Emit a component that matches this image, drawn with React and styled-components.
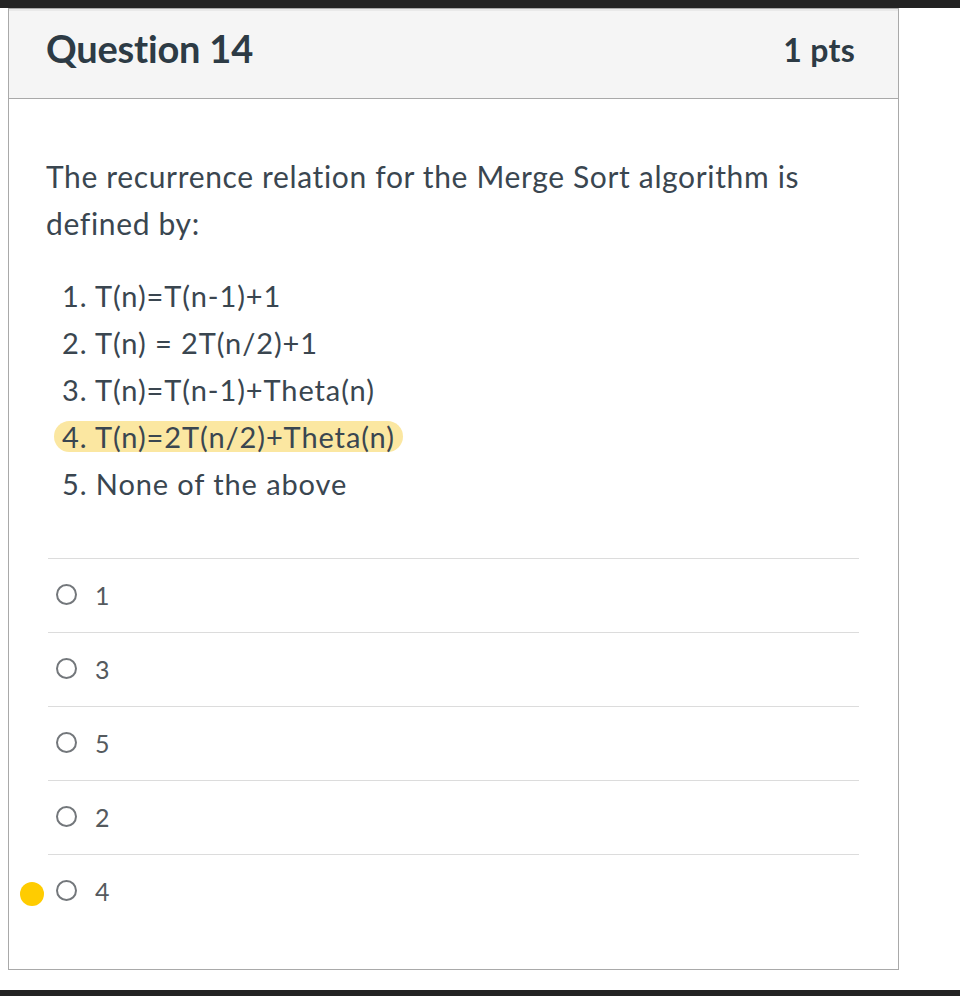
import React from 'react';
import styled, { createGlobalStyle } from 'styled-components';

const GlobalStyle = createGlobalStyle`
  html, body {
    margin: 0;
    padding: 0;
    background: #ffffff;
  }
  body {
    font-family: Lato, "Open Sans", "Liberation Sans", sans-serif;
    color: #2d3b45;
  }
`;

const Page = styled.div`
  width: 960px;
  height: 996px;
  display: flex;
  flex-direction: column;
  overflow: hidden;
`;

const DarkBar = styled.div`
  height: ${props => props.size}px;
  background: #232323;
  flex-shrink: 0;
`;

const Stage = styled.div`
  flex: 1;
  padding: 0 61px 0 8px;
`;

const Card = styled.div`
  border: 1px solid #a9a9a9;
  background: #fff;
  height: 962px;
  box-sizing: border-box;
  display: flex;
  flex-direction: column;
`;

const Header = styled.div`
  height: 90px;
  box-sizing: border-box;
  background: #f5f5f5;
  border-top: 2px solid #e9e9e9;
  border-bottom: 1px solid #a9a9a9;
  display: flex;
  align-items: center;
  justify-content: space-between;
  padding: 0 43px 10px 37px;
`;

const Title = styled.h2`
  margin: 0 0 4px;
  font-size: 38px;
  font-weight: 700;
  color: #2d3b45;
  letter-spacing: -0.2px;
`;

const Points = styled.span`
  font-size: 32px;
  font-weight: 700;
  color: #2d3b45;
  letter-spacing: 0.3px;
`;

const Body = styled.div`
  padding: 54px 39px 0 37px;
`;

const Prompt = styled.p`
  margin: 0;
  font-size: 30px;
  line-height: 47px;
  letter-spacing: 0.65px;
  color: #3a4650;
`;

const Choices = styled.div`
  margin-top: 25px;
  display: flex;
  flex-direction: column;
  align-items: flex-start;
`;

const Choice = styled.div`
  height: 47px;
  font-size: 29px;
  letter-spacing: 0.9px;
  color: #3a4650;
  padding-left: 16px;
  display: flex;
  align-items: center;
`;

const Highlight = styled.span`
  background: ${props => (props.on ? '#fbe7a1' : 'transparent')};
  border-radius: 16px;
  line-height: 31px;
  padding: 0 ${props => (props.on ? 8 : 0)}px;
  margin-left: ${props => (props.on ? -8 : 0)}px;
`;

const Answers = styled.div`
  margin: 51px 0 0 2px;
`;

const Answer = styled.label`
  position: relative;
  display: flex;
  align-items: center;
  gap: 18px;
  height: 74px;
  box-sizing: border-box;
  border-top: 1px solid #dcdcdc;
  padding: 0 0 2px 8px;
  font-size: 25px;
  color: #555a5e;
`;

const Radio = styled.span`
  width: 21px;
  height: 21px;
  border: 2px solid #73777b;
  border-radius: 50%;
  box-sizing: border-box;
  flex-shrink: 0;
`;

const Marker = styled.span`
  position: absolute;
  left: -28px;
  top: 27px;
  width: 24px;
  height: 24px;
  border-radius: 50%;
  background: #ffcc00;
`;

const list = [
  'T(n)=T(n-1)+1',
  'T(n) = 2T(n/2)+1',
  'T(n)=T(n-1)+Theta(n)',
  'T(n)=2T(n/2)+Theta(n)',
  'None of the above',
];

const answers = ['1', '3', '5', '2', '4'];

export default function App() {
  return (
    <Page>
      <GlobalStyle />
      <DarkBar size={8} />
      <Stage>
        <Card>
          <Header>
            <Title>Question 14</Title>
            <Points>1 pts</Points>
          </Header>
          <Body>
            <Prompt>
              The recurrence relation for the Merge Sort algorithm is
              <br />
              defined by:
            </Prompt>
            <Choices>
              {list.map((item, i) => (
                <Choice key={i}>
                  <Highlight on={i === 3}>{`${i + 1}. ${item}`}</Highlight>
                </Choice>
              ))}
            </Choices>
            <Answers>
              {answers.map(a => (
                <Answer key={a}>
                  {a === '4' && <Marker />}
                  <Radio />
                  {a}
                </Answer>
              ))}
            </Answers>
          </Body>
        </Card>
      </Stage>
      <DarkBar size={6} />
    </Page>
  );
}
